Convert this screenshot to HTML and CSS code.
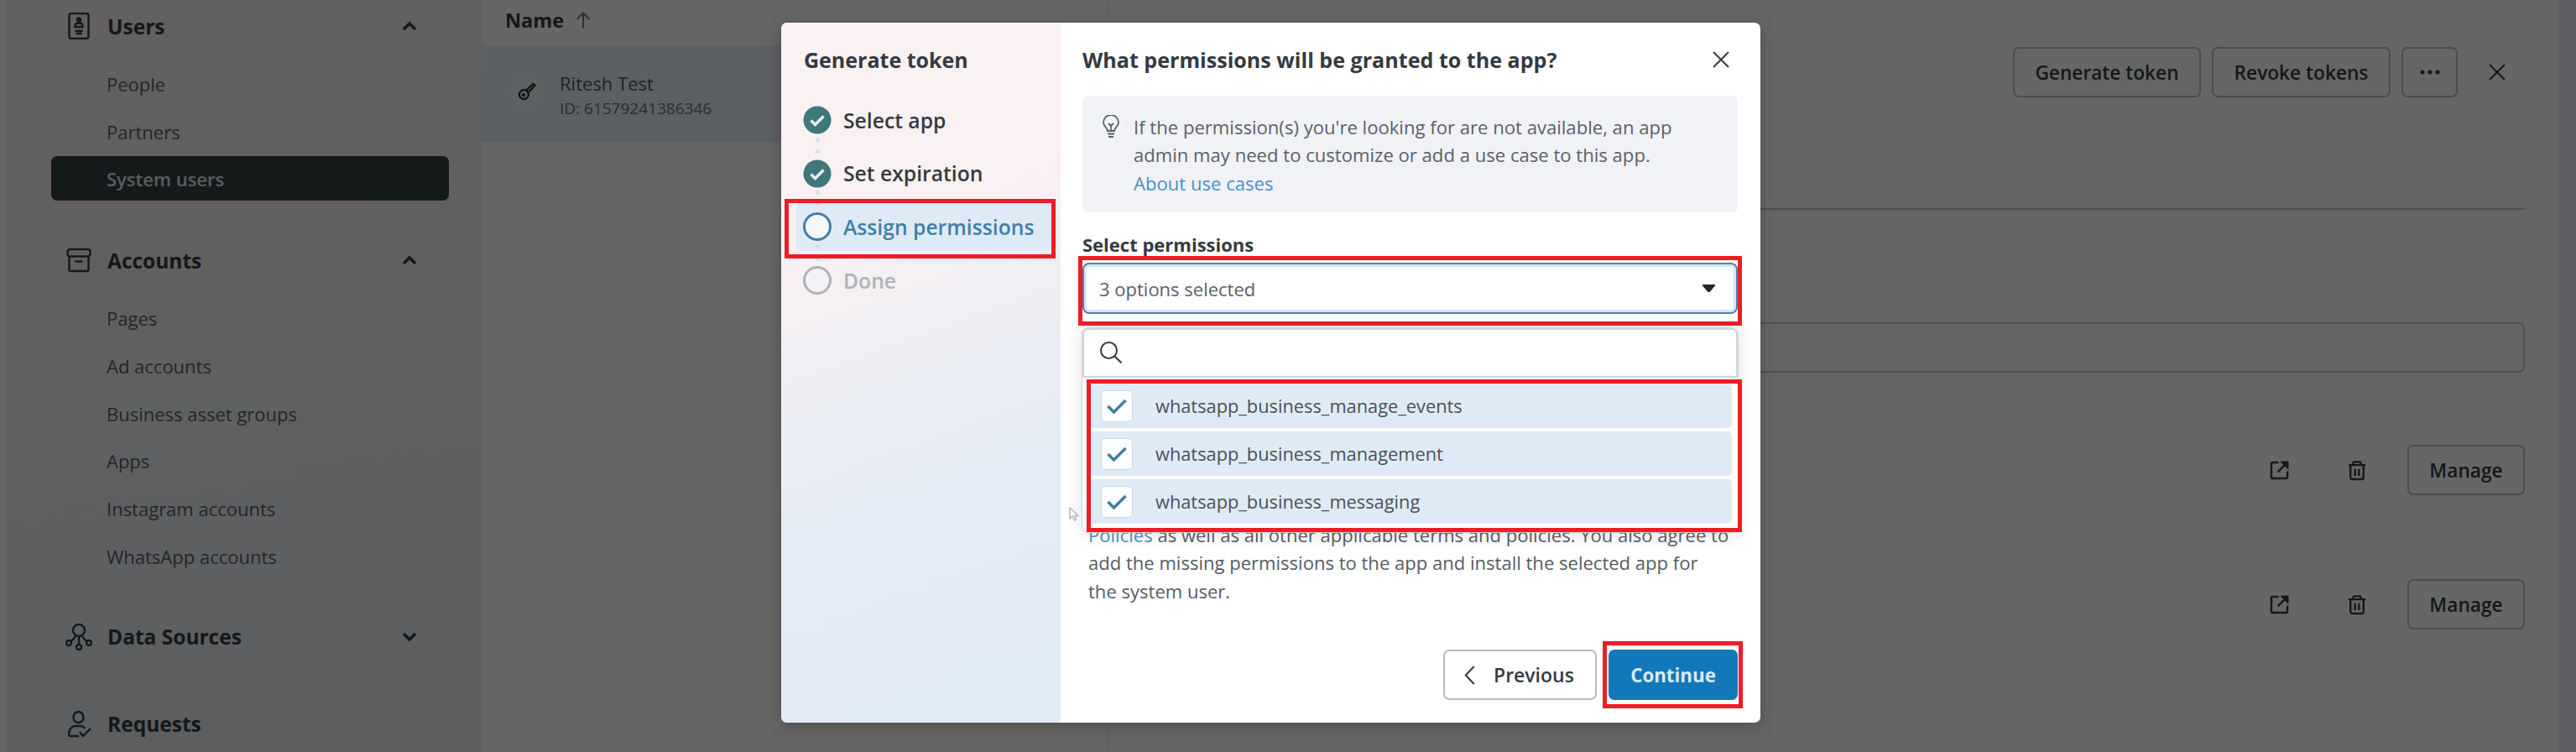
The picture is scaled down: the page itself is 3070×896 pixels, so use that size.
FILE: index.html
```html
<!DOCTYPE html>
<html lang="en">
<head>
  <meta charset="UTF-8" />
  <meta name="viewport" content="width=device-width, initial-scale=1.0"/>
  <title>Business settings - System users</title>
  <link rel="stylesheet" href="styles.css">
</head>
<body>
  <div class="page">
    <!-- Sidebar -->
    <nav class="sidebar">
      <div class="group-head">
        <svg class="icon" viewBox="0 0 32 32"><rect x="4.500" y="1" width="23" height="30" rx="2.500"/><circle cx="16" cy="8.500" r="2" class="solid"/><path d="M11.500 17v-1.500c0-2 2-3 4.500-3s4.500 1 4.500 3V17zM11.500 22h9M12.500 25h7"/></svg>
        <span>Users</span>
        <svg class="chevron" viewBox="0 0 18 12"><path d="M2 10l7-7 7 7"/></svg>
      </div>
      <ul>
        <li>People</li>
        <li>Partners</li>
        <li class="active">System users</li>
      </ul>
      <div class="group-head accounts">
        <svg class="icon" viewBox="0 0 32 32"><rect x="2.500" y="3" width="27" height="8.500" rx="3"/><path d="M4.500 11.500V27a2 2 0 0 0 2 2h19a2 2 0 0 0 2-2V11.500M11.500 17.500h9"/></svg>
        <span>Accounts</span>
        <svg class="chevron" viewBox="0 0 18 12"><path d="M2 10l7-7 7 7"/></svg>
      </div>
      <ul>
        <li>Pages</li>
        <li>Ad accounts</li>
        <li>Business asset groups</li>
        <li>Apps</li>
        <li>Instagram accounts</li>
        <li>WhatsApp accounts</li>
      </ul>
      <div class="group-head sources">
        <svg class="icon" viewBox="0 0 32 32"><circle cx="16" cy="8" r="7"/><circle cx="4" cy="23" r="3"/><circle cx="28" cy="23" r="3"/><circle cx="16" cy="28" r="3"/><path d="M16 15v10M12 14c-1 4-4 6-6 7M20 14c1 4 4 6 6 7"/></svg>
        <span>Data Sources</span>
        <svg class="chevron" viewBox="0 0 18 12"><path d="M2 2l7 7 7-7"/></svg>
      </div>
      <div class="group-head requests">
        <svg class="icon" viewBox="0 0 32 32"><ellipse cx="15.500" cy="7.500" rx="6" ry="6.500"/><path d="M16 30H6c-1.500 0-2-1-2-2 0-6 3.500-10 8-10h6c2 0 4 1 5 3M17 25l4 5 9-9"/></svg>
        <span>Requests</span>
      </div>
    </nav>

    <!-- User list -->
    <section class="users">
      <div class="list-head">Name
        <svg viewBox="0 0 18 20"><path d="M9 20V1.500M1.500 9L9 1.500 16.500 9"/></svg>
      </div>
      <div class="user">
        <span class="avatar">
          <svg viewBox="0 0 24 24"><circle cx="8" cy="16" r="6"/><circle cx="7.500" cy="16.500" r="1" class="solid"/><path d="M11 10.500L20 2l2.500 2-9 9.500"/></svg>
        </span>
        <div>
          <div class="user-name">Ritesh Test</div>
          <div class="user-id">ID: 61579241386346</div>
        </div>
      </div>
    </section>

    <!-- Details -->
    <main class="details">
      <div class="toolbar">
        <button class="btn gen">Generate token</button>
        <button class="btn rev">Revoke tokens</button>
        <button class="btn more"><svg viewBox="0 0 24 6"><circle cx="3" cy="3" r="2.500"/><circle cx="12" cy="3" r="2.500"/><circle cx="21" cy="3" r="2.500"/></svg></button>
        <svg class="close" viewBox="0 0 20 20"><path d="M1 1l18 18M19 1L1 19"/></svg>
      </div>
      <div class="search-input"></div>
      <div class="asset">
        <svg class="open" viewBox="0 0 24 24"><path d="M11 2H4a2 2 0 0 0-2 2v16a2 2 0 0 0 2 2h16a2 2 0 0 0 2-2v-7M10 14L21 3M15 2h7v7"/><path class="solid" d="M16 2h6v6z"/></svg>
        <svg class="trash" viewBox="0 0 24 26"><path d="M1 6h22M7 6V3.500C7 2.500 8 2 9 2h6c1 0 2 .5 2 1.500V6M3.500 6v16a2.500 2.500 0 0 0 2.500 2.500h12a2.500 2.500 0 0 0 2.500-2.500V6M9.500 11v9M14.500 11v9"/></svg>
        <button class="btn manage">Manage</button>
      </div>
      <div class="asset">
        <svg class="open" viewBox="0 0 24 24"><path d="M11 2H4a2 2 0 0 0-2 2v16a2 2 0 0 0 2 2h16a2 2 0 0 0 2-2v-7M10 14L21 3M15 2h7v7"/><path class="solid" d="M16 2h6v6z"/></svg>
        <svg class="trash" viewBox="0 0 24 26"><path d="M1 6h22M7 6V3.500C7 2.500 8 2 9 2h6c1 0 2 .5 2 1.500V6M3.500 6v16a2.500 2.500 0 0 0 2.500 2.500h12a2.500 2.500 0 0 0 2.500-2.500V6M9.500 11v9M14.500 11v9"/></svg>
        <button class="btn manage">Manage</button>
      </div>
    </main>
  </div>

  <div class="overlay">
    <div class="modal">
      <!-- Steps -->
      <aside class="steps">
        <h2>Generate token</h2>
        <ol>
          <li class="done"><svg viewBox="0 0 34 34"><circle cx="17" cy="17" r="16.500"/><path d="M9.500 17.500l5 5 10-10"/></svg>Select app</li>
          <li class="done"><svg viewBox="0 0 34 34"><circle cx="17" cy="17" r="16.500"/><path d="M9.500 17.500l5 5 10-10"/></svg>Set expiration</li>
          <li class="current"><svg viewBox="0 0 34 34"><circle cx="17" cy="17" r="15.500"/></svg>Assign permissions</li>
          <li class="todo"><svg viewBox="0 0 34 34"><circle cx="17" cy="17" r="15.500"/></svg>Done</li>
        </ol>
        <span class="mark mark-step"></span>
      </aside>

      <!-- Permissions -->
      <div class="content">
        <header>
          <h2>What permissions will be granted to the app?</h2>
          <svg class="close" viewBox="0 0 20 20"><path d="M1 1l18 18M19 1L1 19"/></svg>
        </header>
        <div class="tip">
          <svg viewBox="0 0 20 28"><path d="M6 19c0-4-5-5-5-10a9 9 0 0 1 18 0c0 5-5 6-5 10zM7 10l3 3 3-3M10 13v6M6 22.500h8M7 26h6"/></svg>
          <p>If the permission(s) you're looking for are not available, an app<br>admin may need to customize or add a use case to this app.<br><a>About use cases</a></p>
        </div>
        <label>Select permissions</label>
        <div class="select">3 options selected
          <svg viewBox="0 0 16 10"><path d="M1 0h14q1.500 1 0 2L9.500 8.500q-1.500 1.500-3 0L1 2q-1.500-1 0-2z"/></svg>
          <span class="mark mark-select"></span>
        </div>

        <div class="terms-wrap">
          <p class="terms"><a>Policies</a> as well as all other applicable terms and policies. You also agree to<br>add the missing permissions to the app and install the selected app for<br>the system user.</p>
          <div class="dropdown">
            <div class="search"><svg viewBox="0 0 26 26"><circle cx="10.500" cy="10.500" r="9.500"/><path d="M17.500 17.500l8 8"/></svg></div>
            <div class="option"><span class="box"><svg viewBox="0 0 24 18"><path d="M1.500 9l7 7L22.500 2"/></svg></span>whatsapp_business_manage_events</div>
            <div class="option"><span class="box"><svg viewBox="0 0 24 18"><path d="M1.500 9l7 7L22.500 2"/></svg></span>whatsapp_business_management</div>
            <div class="option"><span class="box"><svg viewBox="0 0 24 18"><path d="M1.500 9l7 7L22.500 2"/></svg></span>whatsapp_business_messaging</div>
            <span class="mark mark-options"></span>
          </div>
          <svg class="cursor" viewBox="0 0 12 18"><path d="M1 1v13l3-3 2.500 5 2-1-2-4.500H11z"/></svg>
        </div>

        <footer>
          <button class="prev"><svg viewBox="0 0 12 22"><path d="M11 1L1.500 11l9.500 10"/></svg>Previous</button>
          <button class="next">Continue<span class="mark mark-next"></span></button>
        </footer>
      </div>
    </div>
  </div>
</body>
</html>
```
FILE: styles.css
```css
* { box-sizing: border-box; }
body { margin: 0; height: 896px; overflow: hidden; font-family: "Open Sans", "Noto Sans", sans-serif; font-size: 22px; color: #323c41; background: #fff; }
h2, p, ul, ol { margin: 0; padding: 0; list-style: none; }
h2 { font-size: 25px; font-weight: 700; }
button { font-family: inherit; padding: 0; margin: 0; }
svg { flex: none; fill: none; stroke: currentColor; stroke-width: 2; }
svg .solid { fill: currentColor; }

/* page behind the dialog */
.page { display: flex; height: 896px; padding-left: 8px; background: linear-gradient(90deg, #fff 50%, #e7ebf4 50%); }
.sidebar { width: 566px; padding: 1px 39px 0 53px; background: linear-gradient(170deg, #f6efef 0%, #f5eeee 27%, #f0f0f0 42%, #ebeef2 65%, #e5ebf0 100%); }
.group-head { display: flex; align-items: center; height: 60px; padding: 0 38px 0 17px; font-size: 24.500px; font-weight: 700; }
.group-head .icon { width: 32px; height: 32px; margin-right: 18px; stroke-width: 2.400; }
.group-head .chevron { width: 18px; height: 12px; margin-left: auto; stroke-width: 3.400; }
.accounts { margin-top: 41px; }
.sources { margin-top: 40px; }
.requests { margin-top: 44px; }
.sidebar ul { padding-top: 12px; }
.sidebar li { height: 53px; margin-bottom: 3.700px; padding-left: 66px; line-height: 54px; border-radius: 7px; color: #586269; }
.sidebar li.active { background: #343f43; color: #e2e6e9; font-weight: 600; }

.users { width: 745px; background: #fff; }
.list-head { display: flex; align-items: center; height: 54px; padding: 0 28px 6px; font-size: 23.500px; font-weight: 700; }
.list-head svg { width: 18px; height: 20px; margin-left: 14px; color: #707b85; }
.user { display: flex; align-items: center; height: 115px; padding-left: 32px; background: #e6edf8; color: #4c565c; }
.avatar { display: flex; align-items: center; justify-content: center; width: 44px; height: 44px; margin: -6px 17px 0 0; border-radius: 50%; background: #ecf0f4; color: #232b30; }
.avatar svg { width: 22px; height: 22px; stroke-width: 2.400; }
.user-name { padding-top: 3px; line-height: 31px; }
.user-id { font-size: 19px; line-height: 28px; color: #687277; }

.details { flex: 1; margin-right: 21px; padding: 0 40px 0 43px; background: #fff; border-left: 1px solid #eee; }
.toolbar { display: flex; justify-content: flex-end; height: 250px; padding: 56px 23px 0 0; border-bottom: 2px solid #c3c8cb; }
.btn { height: 60px; border: 2px solid #b9c0c5; border-radius: 7px; background: none; color: #323c41; font-size: 22.700px; font-weight: 600; }
.gen { width: 224px; margin-right: 13px; }
.rev { width: 213px; margin-right: 13px; }
.more { width: 67px; display: flex; align-items: center; justify-content: center; }
.more svg { width: 24px; height: 6px; fill: #323c41; stroke: none; }
.close { width: 20px; height: 20px; }
.toolbar .close { margin: 20px 0 0 37px; }
.search-input { height: 60px; margin-top: 134px; border: 2px solid #c3c8cb; border-radius: 7px; }
.asset { display: flex; align-items: center; justify-content: flex-end; height: 60px; margin-top: 86px; }
.asset + .asset { margin-top: 100px; }
.asset svg { stroke-width: 2.600; }
.open { width: 23px; height: 23px; }
.trash { width: 22px; height: 25px; margin: 0 49px 0 70px; }
.manage { width: 140px; }

/* dialog */
.overlay { position: absolute; top: 0; left: 0; width: 3070px; height: 896px; padding: 27px 0 0 931px; background: rgba(0,0,0,0.6); }
.modal { display: flex; width: 1167px; height: 834px; border-radius: 7px; background: #fff; color: #343a40; box-shadow: 0 4px 20px rgba(0,0,0,0.25); }
.steps { position: relative; flex: none; width: 333px; padding: 27px 11px 0 18px; border-radius: 7px 0 0 7px; background: linear-gradient(160deg, #f9f1f2 0%, #f8f0f2 32%, #eeeff4 46%, #e5ecf5 65%, #e0ebf5 100%); }
.steps h2 { padding-left: 9px; line-height: 34px; }
.steps ol { padding-top: 26px; }
.steps li { position: relative; display: flex; align-items: center; height: 58px; margin-bottom: 5.700px; padding-left: 8px; font-size: 24.700px; font-weight: 600; white-space: nowrap; border-radius: 6px; }
.steps li svg { width: 34px; height: 34px; margin-right: 14px; stroke-width: 3; }
.steps li + li::before { content: ""; position: absolute; left: 23px; top: -18px; width: 5px; height: 23px; background: radial-gradient(circle, #dcdfe3 2.500px, transparent 3px) 0 0 / 5px 14px; }
.done circle { fill: #40777b; stroke: none; }
.done path { stroke: #e6eff0; stroke-width: 3.400; }
.current { background: #deebf6; color: #417fa6; }
.current circle { fill: #f4f8fb; }
.todo { color: #adb3b9; }
.todo circle { fill: #f3f3f6; }

.content { display: flex; flex-direction: column; flex: 1; min-width: 0; padding: 27px 27px 0 26px; }
.content header { display: flex; justify-content: space-between; height: 60px; padding-right: 10px; }
.content h2 { line-height: 34px; font-size: 25.100px; }
.content .close { margin-top: 7px; }
.tip { display: flex; height: 139px; padding: 23px 24px; border-radius: 6px; background: #f1f2f6; color: #59616a; }
.tip svg { width: 20px; height: 28px; margin-right: 17px; stroke-width: 1.800; }
.tip p { line-height: 33.400px; font-size: 22.100px; white-space: nowrap; margin-top: -2px; }
a { color: #4b8fc0; }
.content label { height: 60px; padding-top: 21px; line-height: 34px; font-weight: 700; }
.select { position: relative; display: flex; align-items: center; justify-content: space-between; height: 61px; padding: 0 24px 0 18px; border: 2px solid #4c86a6; border-radius: 8px; box-shadow: inset 0 0 0 3px #d5e6f2; color: #59616a; }
.select svg { width: 17px; height: 10px; fill: #24282c; stroke: none; }

.terms-wrap { position: relative; height: 400px; padding: 247px 0 0 7px; }
.terms { line-height: 33.400px; font-size: 22.050px; white-space: nowrap; color: #555c64; }
.dropdown { position: absolute; top: 17px; left: 0; width: 781px; height: 243px; border-radius: 7px; background: #fff; box-shadow: 0 2px 22px rgba(80,60,90,0.18), 0 0 0 1px #dfe1e5; }
.search { height: 59px; margin-bottom: 7px; padding: 14px 0 0 21px; border: 2px solid #d2d5d9; border-radius: 7px 7px 0 0; }
.search svg { display: block; width: 26px; height: 26px; margin-left: -2px; }
.option { display: flex; align-items: center; height: 53px; margin: 0 7px 4px 8px; padding-left: 14px; border-radius: 5px; background: #deebf6; color: #4a5159; font-size: 21.800px; }
.box { display: flex; align-items: center; justify-content: center; width: 38px; height: 38px; margin-right: 27px; border: 1px solid #cfd8df; border-radius: 5px; background: #fbfdff; color: #3e7da3; }
.box svg { width: 24px; height: 18px; stroke-width: 3.400; }
.cursor { position: absolute; top: 230px; left: -16px; width: 12px; height: 18px; fill: #fff; color: #b3b6bb; stroke-width: 1.500; }

.content footer { display: flex; justify-content: flex-end; height: 60px; gap: 14px; }
.prev, .next { position: relative; height: 60px; border-radius: 7px; }
.prev { display: flex; align-items: center; width: 183px; padding-left: 23px; border: 2px solid #b4babf; background: #fff; color: #343a40; font-size: 23px; font-weight: 600; }
.prev svg { width: 13px; height: 23px; margin-right: 22px; }
.next { width: 154px; border: none; background: #1278ba; color: #d9eaf7; font-size: 22.300px; font-weight: 700; }

/* red highlights */
.mark { position: absolute; border: 5px solid #ee1c25; pointer-events: none; }
.mark-step { left: 4px; top: 210px; width: 323px; height: 71px; }
.mark-select { left: -7px; top: -10px; width: 791px; height: 83px; }
.mark-options { left: 5px; top: 61px; width: 781px; height: 182px; }
.mark-next { left: -7px; top: -10px; width: 167px; height: 80px; }
```
